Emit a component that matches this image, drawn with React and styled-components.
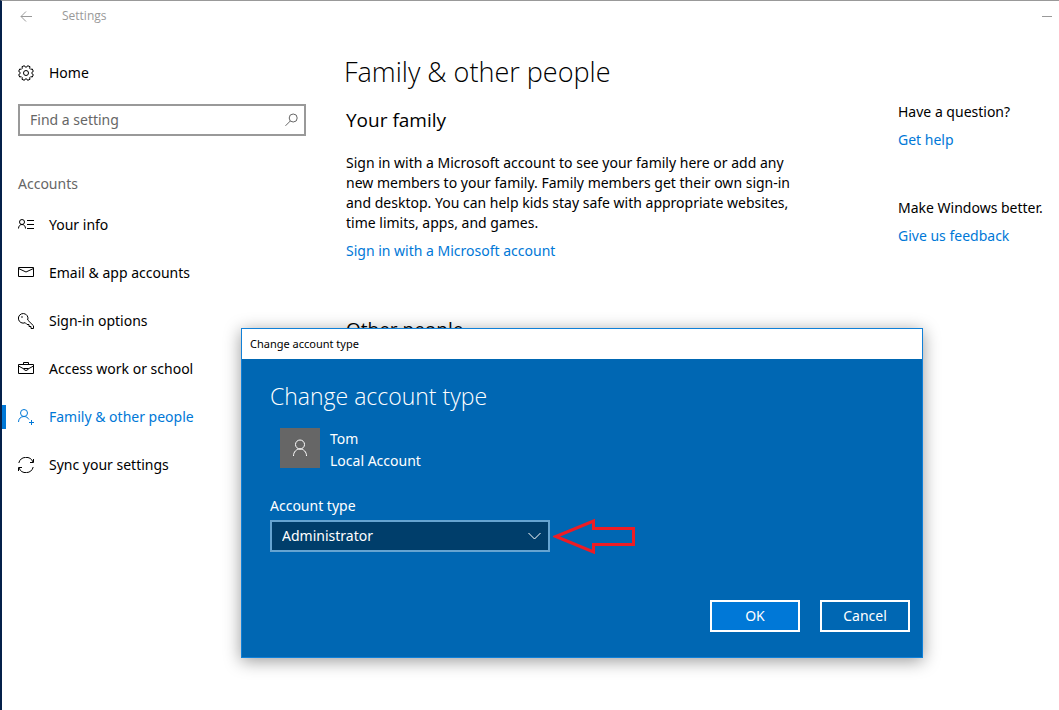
import React, { useState } from 'react';
import styled, { createGlobalStyle, css } from 'styled-components';

const GlobalStyle = createGlobalStyle`
  * {
    box-sizing: border-box;
  }

  body {
    margin: 0;
    background: #fff;
    color: #000;
    font-family: "Noto Sans", "Open Sans", sans-serif;
    font-size: 14px;
    line-height: 20px;
  }

  button, input, select {
    font: inherit;
  }
`;

const accountPages = [
  { label: 'Your info', icon: InfoIcon },
  { label: 'Email & app accounts', icon: MailIcon },
  { label: 'Sign-in options', icon: KeyIcon },
  { label: 'Access work or school', icon: BriefcaseIcon },
  { label: 'Family & other people', icon: FamilyIcon, active: true },
  { label: 'Sync your settings', icon: SyncIcon },
];

const App = () => {
  const [accountType, setAccountType] = useState('Administrator');
  const [search, setSearch] = useState('');

  return (
    <Window>
      <GlobalStyle />
      <TitleBar>
        <TitleButton aria-label="Back">
          <BackIcon />
        </TitleButton>
        <WindowTitle>Settings</WindowTitle>
        <TitleButton aria-label="Minimize">
          <MinimizeIcon />
        </TitleButton>
      </TitleBar>

      <Columns>
        <Sidebar>
          <NavLink href="#home">
            <GearIcon />
            Home
          </NavLink>
          <SearchBox>
            <SearchInput
              type="text"
              aria-label="Find a setting"
              placeholder="Find a setting"
              value={search}
              onChange={e => setSearch(e.target.value)}
            />
            <SearchIcon />
          </SearchBox>
          <GroupTitle>Accounts</GroupTitle>
          {accountPages.map(({ label, icon: Icon, active }) => (
            <NavLink key={label} href="#accounts" $active={active}>
              <Icon />
              {label}
            </NavLink>
          ))}
        </Sidebar>

        <Main>
          <PageTitle>Family &amp; other people</PageTitle>
          <SectionTitle>Your family</SectionTitle>
          <Text>
            Sign in with a Microsoft account to see your family here or add any
            new members to your family. Family members get their own sign-in
            and desktop. You can help kids stay safe with appropriate websites,
            time limits, apps, and games.
          </Text>
          <Link href="#signin">Sign in with a Microsoft account</Link>
          <OtherTitle>Other people</OtherTitle>
        </Main>

        <Aside>
          <HelpBlock>
            <span>Have a question?</span>
            <Link href="#help">Get help</Link>
          </HelpBlock>
          <HelpBlock>
            <span>Make Windows better.</span>
            <Link href="#feedback">Give us feedback</Link>
          </HelpBlock>
        </Aside>
      </Columns>

      <Dialog role="dialog" aria-labelledby="dialog-title">
        <DialogBar>Change account type</DialogBar>
        <DialogBody>
          <DialogTitle id="dialog-title">Change account type</DialogTitle>
          <Person>
            <Avatar>
              <PersonIcon />
            </Avatar>
            <div>
              <div>Tom</div>
              <div>Local Account</div>
            </div>
          </Person>
          <Label htmlFor="account-type">Account type</Label>
          <FieldRow>
            <SelectBox>
              <Select
                id="account-type"
                value={accountType}
                onChange={e => setAccountType(e.target.value)}
              >
                <option>Administrator</option>
                <option>Standard User</option>
              </Select>
              <ChevronIcon />
            </SelectBox>
            <RedArrow />
          </FieldRow>
          <Actions>
            <Button $primary>OK</Button>
            <Button>Cancel</Button>
          </Actions>
        </DialogBody>
      </Dialog>
    </Window>
  );
};

const Window = styled.div`
  position: relative;
  min-height: 100vh;
  border-top: 1px solid #999;
  border-left: 2px solid #04204a;
`;

const TitleBar = styled.header`
  display: flex;
  align-items: center;
  height: 30px;
  padding: 0 7px 0 18px;
  color: #999;
  font-family: "Open Sans", sans-serif;
  font-size: 12px;
`;

const TitleButton = styled.button`
  display: flex;
  padding: 0;
  border: none;
  background: none;
  color: inherit;
`;

const WindowTitle = styled.span`
  flex: 1;
  padding-left: 28px;
`;

const Columns = styled.div`
  display: flex;
`;

const Sidebar = styled.nav`
  flex: 0 0 344px;
  padding: 18px 40px 0 0;
`;

const NavLink = styled.a`
  display: flex;
  align-items: center;
  gap: 15px;
  height: 48px;
  padding-left: 16px;
  color: #000;
  text-decoration: none;

  svg {
    flex: none;
  }

  ${({ $active }) => $active && css`
    padding-left: 0;
    color: #0078d7;

    &:before {
      content: '';
      width: 4px;
      height: 24px;
      margin-right: -3px;
      background: #0078d7;
    }
  `}
`;

const SearchBox = styled.div`
  display: flex;
  align-items: center;
  height: 32px;
  margin: 7px 0 36px 16px;
  padding: 0 6px 0 10px;
  border: 2px solid #999;
`;

const SearchInput = styled.input`
  flex: 1;
  min-width: 0;
  padding: 0;
  border: none;
  outline: none;
  background: none;

  &::placeholder {
    color: #666;
    opacity: 1;
  }
`;

const GroupTitle = styled.div`
  margin-bottom: 5px;
  padding-left: 16px;
  color: #666;
  line-height: 24px;
`;

const Main = styled.main`
  flex: 1;
  padding-top: 23px;
`;

const PageTitle = styled.h1`
  margin: 0 0 16px -2px;
  font-family: "Open Sans", sans-serif;
  font-size: 27px;
  font-weight: 300;
  line-height: 36px;
`;

const SectionTitle = styled.h2`
  margin: 0 0 19px;
  font-family: "Open Sans", sans-serif;
  font-size: 19px;
  font-weight: 400;
  line-height: 28px;
`;

const OtherTitle = styled(SectionTitle)`
  margin-top: 54px;
`;

const Text = styled.p`
  max-width: 460px;
  margin: 0 0 8px;
`;

const Link = styled.a`
  color: #0078d7;
  text-decoration: none;
`;

const Aside = styled.aside`
  display: flex;
  flex: 0 0 161px;
  flex-direction: column;
  gap: 48px;
  padding-top: 71px;
  white-space: nowrap;
`;

const HelpBlock = styled.div`
  display: flex;
  flex-direction: column;
  gap: 8px;
`;

// floats over the settings page
const Dialog = styled.section`
  position: absolute;
  top: 327px;
  left: 239px;
  width: 682px;
  border: 1px solid #1080d8;
  background: #0067b3;
  color: #fff;
  box-shadow: 0 3px 16px rgba(0, 0, 0, 0.4);
`;

const DialogBar = styled.div`
  padding-left: 8px;
  background: #fff;
  color: #000;
  font-size: 11px;
  line-height: 30px;
`;

const DialogBody = styled.div`
  padding: 21px 12px 25px 28px;
`;

const DialogTitle = styled.h2`
  margin: 0 0 16px;
  font-family: "Open Sans", sans-serif;
  font-size: 23px;
  font-weight: 300;
  line-height: 32px;
`;

const Person = styled.div`
  display: flex;
  gap: 10px;
  margin: 0 0 24px 10px;
  line-height: 22px;
`;

const Avatar = styled.div`
  display: flex;
  align-items: center;
  justify-content: center;
  width: 40px;
  height: 40px;
  background: #666;
`;

const Label = styled.label`
  display: block;
  margin-bottom: 4px;
`;

const FieldRow = styled.div`
  display: flex;
  align-items: center;
  gap: 3px;
  height: 32px;
`;

const SelectBox = styled.div`
  display: grid;
  align-items: center;
  width: 280px;

  > * {
    grid-area: 1 / 1;
  }

  svg {
    justify-self: end;
    margin-right: 9px;
    pointer-events: none;
  }
`;

const Select = styled.select`
  width: 100%;
  height: 32px;
  padding: 0 10px;
  border: 2px solid #66a4d1;
  border-radius: 0;
  background: #003e6b;
  color: #fff;
  appearance: none;
`;

const Actions = styled.div`
  display: flex;
  justify-content: flex-end;
  gap: 20px;
  margin-top: 48px;
`;

const Button = styled.button`
  width: 90px;
  height: 32px;
  padding: 0;
  border: 2px solid #fff;
  background: ${({ $primary }) => ($primary ? '#0078d7' : 'transparent')};
  color: #fff;
`;

const Icon = styled.svg.attrs({ 'aria-hidden': true })`
  display: block;
  fill: none;
  stroke: currentColor;
  stroke-width: ${({ $weight }) => $weight || 1};
`;

function BackIcon() {
  return (
    <Icon width="14" height="14" viewBox="0 0 14 14">
      <path d="M12 7.500H1M6 2.500l-5 5 5 5" />
    </Icon>
  );
}

function MinimizeIcon() {
  return (
    <Icon width="10" height="10" viewBox="0 0 10 10">
      <path d="M0 5.500h10" />
    </Icon>
  );
}

// eight teeth, each one a step out from the rim and back
const gearPoints = Array.from({ length: 8 }, (_, i) => i * 45)
  .flatMap(a => [[a - 15, 6], [a - 10, 7.5], [a + 10, 7.5], [a + 15, 6]])
  .map(([deg, r]) => {
    const rad = ((deg + 22.5) * Math.PI) / 180;
    return `${8 + r * Math.cos(rad)},${8 + r * Math.sin(rad)}`;
  })
  .join(' ');

function GearIcon() {
  return (
    <Icon width="16" height="16" viewBox="0 0 16 16">
      <polygon points={gearPoints} />
      <circle cx="8" cy="8" r="2.500" />
    </Icon>
  );
}

function SearchIcon() {
  return (
    <Icon width="13" height="14" viewBox="0 0 13 14" style={{ color: '#666' }}>
      <circle cx="8.200" cy="5" r="4" />
      <path d="M5.300 8L.5 12.800" />
    </Icon>
  );
}

function InfoIcon() {
  return (
    <Icon width="16" height="16" viewBox="0 0 16 16">
      <circle cx="4" cy="5" r="2.500" />
      <path d="M.5 11.500c0-2.300 1.500-4 3.500-4s3.500 1.700 3.500 4M9 3.500h7M9 7.500h7M9 11.500h7" />
    </Icon>
  );
}

function MailIcon() {
  return (
    <Icon width="16" height="16" viewBox="0 0 16 16">
      <path d="M.5 2.500h15v9H.5zM.5 3.500L8 7l7.500-3.500" />
    </Icon>
  );
}

function KeyIcon() {
  return (
    <Icon width="16" height="16" viewBox="0 0 16 16">
      <path d="M9.700 7l5.800 5.800v2.700h-2.500v-2h-2v-2H9L7.200 9.700A4.800 4.800 0 1 1 9.700 7z" />
      <circle cx="4" cy="4" r=".8" fill="currentColor" stroke="none" />
    </Icon>
  );
}

function BriefcaseIcon() {
  return (
    <Icon width="16" height="16" viewBox="0 0 16 16">
      <path d="M.5 3.500h15v9H.5zM5.500 3.500v-2h5v2M.5 5l5.500 3M15.500 5L10 8M6 7.500h4v1L8 9.600 6 8.500z" />
    </Icon>
  );
}

function FamilyIcon() {
  return (
    <Icon width="16" height="16" viewBox="0 0 16 16">
      <circle cx="6" cy="4" r="3.500" />
      <path d="M.5 13c0-3.300 2.300-5.500 5.500-5.500 2.200 0 4 1.200 5 3M13.500 11v5M11 13.500h5" />
    </Icon>
  );
}

function SyncIcon() {
  return (
    <Icon width="16" height="16" viewBox="0 0 16 16">
      <path d="M.8 6A7.500 7.500 0 0 1 15 5M15.200 10A7.500 7.500 0 0 1 1 11M15.500 2v3.500H12M.5 14v-3.500H4" />
    </Icon>
  );
}

function PersonIcon() {
  return (
    <Icon width="16" height="18" viewBox="0 0 16 18">
      <circle cx="8" cy="5.500" r="4.500" />
      <path d="M1.500 17c0-4 2.700-7 6.500-7s6.500 3 6.500 7" />
    </Icon>
  );
}

function ChevronIcon() {
  return (
    <Icon width="13" height="8" viewBox="0 0 13 8">
      <path d="M.5 1l6 6 6-6" />
    </Icon>
  );
}

function RedArrow() {
  return (
    <Icon width="84" height="36" viewBox="0 0 84 36" $weight={3} style={{ color: '#ed1c24' }}>
      <path d="M3 18.500L40.500 3v7.500h40v16h-40V34z" />
    </Icon>
  );
}

export default App;
